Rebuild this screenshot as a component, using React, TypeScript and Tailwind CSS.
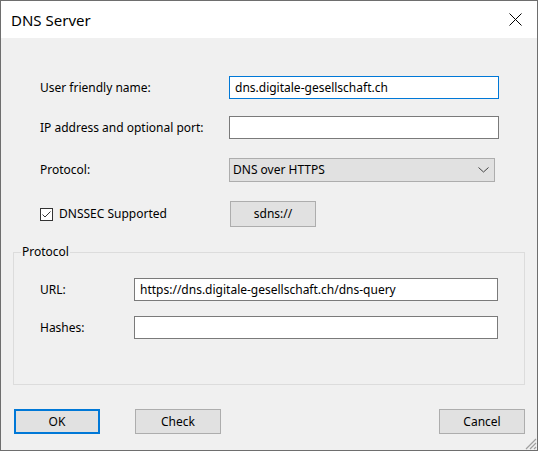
import React from 'react';

function TextBox({ value = '', width, focused = false }: { value?: string; width: string; focused?: boolean }) {
  return (
    <div
      className={`${width} h-[23px] bg-white border flex items-center px-[5px] text-black whitespace-nowrap overflow-hidden ${
        focused ? 'border-[#0078d7]' : 'border-[#7a7a7a]'
      }`}
    >
      {value}
    </div>
  );
}

function WinButton({ label, isDefault = false }: { label: string; isDefault?: boolean }) {
  return (
    <div
      className={`w-[86px] h-[25px] bg-[#e1e1e1] flex items-center justify-center ${
        isDefault ? 'border-2 border-[#0078d7]' : 'border border-[#adadad]'
      }`}
    >
      {label}
    </div>
  );
}

export default function App() {
  return (
    <div className="w-[538px] h-[451px] border border-[#6e6e6e] bg-[#f0f0f0] flex flex-col relative font-['Noto_Sans',sans-serif] text-[12px] text-black leading-[16px]">
      {/* Title bar */}
      <div className="h-[37px] bg-white flex items-center justify-between pl-[10px] pr-[15px]">
        <span className="text-[15px] leading-[20px]">DNS Server</span>
        <svg width="13" height="13" viewBox="0 0 13 13">
          <path d="M0.5 0.5 L12.5 12.5 M12.5 0.5 L0.5 12.5" stroke="#000" strokeWidth="1" />
        </svg>
      </div>

      <div className="flex-1 flex flex-col px-[12px]">
        {/* Main fields */}
        <div className="flex flex-col pl-[27px] pt-[38px]">
          <div className="flex items-center">
            <span className="w-[189px]">User friendly name:</span>
            <TextBox value="dns.digitale-gesellschaft.ch" width="w-[270px]" focused />
          </div>
          <div className="flex items-center mt-[17px]">
            <span className="w-[189px]">IP address and optional port:</span>
            <TextBox width="w-[270px]" />
          </div>
          <div className="flex items-center mt-[19px]">
            <span className="w-[189px]">Protocol:</span>
            <div className="w-[266px] h-[24px] bg-[#e1e1e1] border border-[#adadad] flex items-center justify-between pl-[3px] pr-[5px]">
              <span>DNS over HTTPS</span>
              <svg width="11" height="6" viewBox="0 0 11 6">
                <path d="M0.5 0.5 L5.5 5 L10.5 0.5" fill="none" stroke="#444" strokeWidth="1" />
              </svg>
            </div>
          </div>
          <div className="flex items-center mt-[19px]">
            <div className="w-[190px] flex items-center gap-[6px]">
              <div className="w-[13px] h-[13px] border border-[#333] bg-white flex items-center justify-center">
                <svg width="11" height="11" viewBox="0 0 11 11">
                  <path d="M1.5 5.5 L4 8 L9.5 2.5" fill="none" stroke="#333" strokeWidth="1" />
                </svg>
              </div>
              <span>DNSSEC Supported</span>
            </div>
            <div className="w-[86px] h-[26px] bg-[#e1e1e1] border border-[#adadad] flex items-center justify-center">
              sdns://
            </div>
          </div>
        </div>

        {/* Protocol group */}
        <div className="relative mt-[25px] w-[512px] h-[133px] border border-[#dcdcdc] pt-[25px] pl-[26px]">
          <span className="absolute -top-[9px] left-[7px] px-[1px] bg-[#f0f0f0]">Protocol</span>
          <div className="flex items-center">
            <span className="w-[94px]">URL:</span>
            <TextBox value="https://dns.digitale-gesellschaft.ch/dns-query" width="w-[364px]" />
          </div>
          <div className="flex items-center mt-[15px]">
            <span className="w-[94px]">Hashes:</span>
            <TextBox width="w-[364px]" />
          </div>
        </div>

        {/* Dialog buttons */}
        <div className="flex items-center mt-[24px] pl-[1px]">
          <WinButton label="OK" isDefault />
          <div className="ml-[35px]">
            <WinButton label="Check" />
          </div>
          <div className="ml-auto">
            <WinButton label="Cancel" />
          </div>
        </div>
      </div>

      {/* Resize grip */}
      <svg className="absolute right-0 bottom-0" width="13" height="13" viewBox="0 0 13 13">
        <path d="M12 2 L2 12 M12 6 L6 12 M12 10 L10 12" stroke="#a0a0a0" strokeWidth="1.2" />
      </svg>
    </div>
  );
}
